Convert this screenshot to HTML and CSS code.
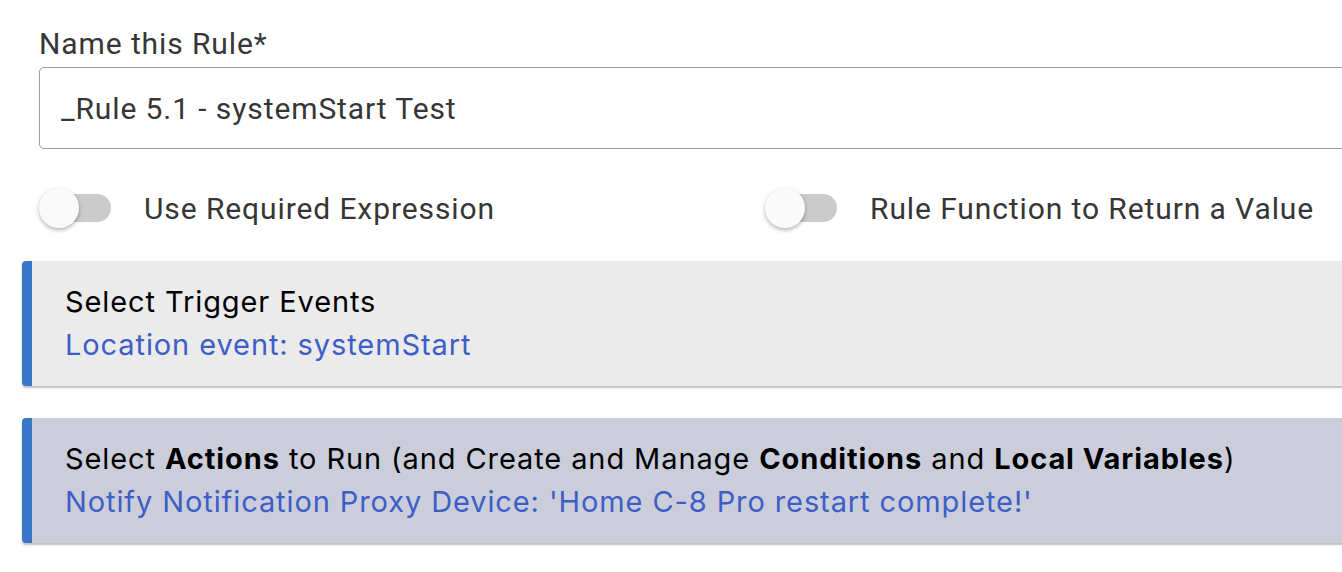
FILE: index.html
```html
<!DOCTYPE html>
<html lang="en">
<head>
    <meta charset="UTF-8">
    <meta name="viewport" content="width=device-width, initial-scale=1.0">
    <title>Rule Machine - Edit Rule</title>
    <link rel="stylesheet" href="styles.css">
</head>
<body>
    <div class="page">
        <div class="fields">
            <label class="field-label" for="ruleName">Name this Rule*</label>
            <input class="text-input" type="text" id="ruleName" value="_Rule 5.1 - systemStart Test">

            <div class="switch-row">
                <label class="switch">
                    <span class="track"><span class="knob"></span></span>
                    <span class="switch-text">Use Required Expression</span>
                </label>
                <label class="switch">
                    <span class="track"><span class="knob"></span></span>
                    <span class="switch-text">Rule Function to Return a Value</span>
                </label>
            </div>
        </div>

        <div class="section section-triggers">
            <div class="section-title">Select Trigger Events</div>
            <a class="section-value" href="#">Location event: systemStart</a>
        </div>

        <div class="section section-actions">
            <div class="section-title">Select <b>Actions</b> to Run (and Create and Manage <b>Conditions</b> and <b>Local Variables</b>)</div>
            <a class="section-value" href="#">Notify Notification Proxy Device: 'Home C-8 Pro restart complete!'</a>
        </div>
    </div>
</body>
</html>
```

FILE: styles.css
```css
* {
    margin: 0;
    padding: 0;
    box-sizing: border-box;
}

body, html {
    background-color: #ffffff;
    overflow: hidden;
}

.page {
    width: 1500px;
    padding: 26px 0 0 22px;
}

/* Campo de nombre y switches */
.fields {
    padding-left: 17px;
    font-family: Roboto, "Liberation Sans", sans-serif;
    color: #363636;
    letter-spacing: 0.9px;
}

.field-label {
    display: block;
    font-size: 30px;
    line-height: 36px;
    margin-bottom: 5px;
}

.text-input {
    display: block;
    width: 100%;
    height: 82px;
    padding: 0 21px;
    border: 1px solid #9e9e9e;
    border-radius: 5px;
    font-family: Roboto, "Liberation Sans", sans-serif;
    font-size: 30px;
    letter-spacing: 0.9px;
    color: #363636;
    background: #fff;
}

.switch-row {
    display: grid;
    grid-template-columns: 726px 1fr;
    padding-top: 6px;
    height: 112px;
}

.switch {
    display: flex;
    align-items: center;
    gap: 33px;
    font-size: 30px;
    cursor: pointer;
}

.track {
    position: relative;
    display: block;
    width: 65px;
    height: 28px;
    margin-left: 7px;
    border-radius: 14px;
    background-color: #cbcbcb;
}

.knob {
    position: absolute;
    left: -7px;
    top: -6px;
    width: 40px;
    height: 40px;
    border-radius: 50%;
    background-color: #fafafa;
    box-shadow: 0 2px 4px rgba(0, 0, 0, 0.3);
}

/* Secciones del rule */
.section {
    margin-bottom: 32px;
    padding: 19px 20px 20px 33px;
    border-left: 10px solid #3a76c8;
    border-radius: 4px;
    font-family: Inter, "Noto Sans", sans-serif;
    font-size: 29px;
    letter-spacing: 0.9px;
    line-height: 43px;
    color: #000;
    box-shadow: 0 2px 2px rgba(0, 0, 0, 0.25);
}

.section-triggers {
    background-color: #ebebeb;
}

.section-actions {
    background-color: #cbceda;
}

.section-title b {
    font-weight: 700;
}

.section-value {
    display: block;
    color: #3c5ec6;
    text-decoration: none;
}
```
